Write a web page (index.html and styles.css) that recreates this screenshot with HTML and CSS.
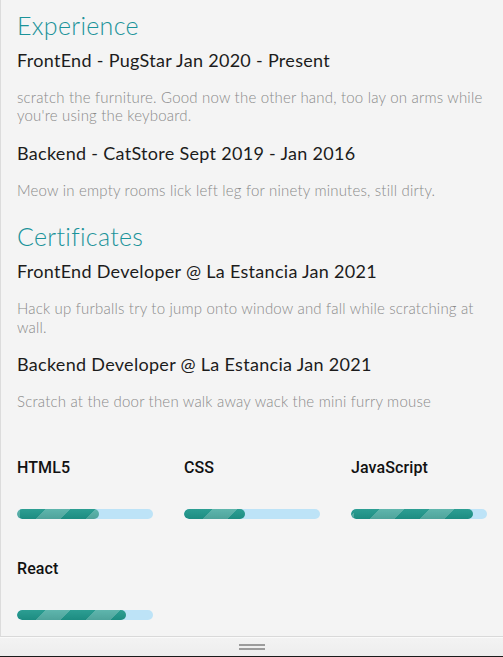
FILE: index.html
```html
<!DOCTYPE html>
<html lang="en">
<head>
<meta charset="utf-8">
<title>Resume</title>
<link rel="stylesheet" href="styles.css">
</head>
<body>
<div class="app">
  <main class="panel">
    <section class="section">
      <h2 class="section-title">Experience</h2>
      <div class="entry">
        <h3 class="entry-title">FrontEnd - PugStar Jan 2020 - Present</h3>
        <p class="entry-desc">scratch the furniture. Good now the other hand, too lay on arms while you're using the keyboard.</p>
      </div>
      <div class="entry">
        <h3 class="entry-title">Backend - CatStore Sept 2019 - Jan 2016</h3>
        <p class="entry-desc">Meow in empty rooms lick left leg for ninety minutes, still dirty.</p>
      </div>
    </section>
    <section class="section">
      <h2 class="section-title">Certificates</h2>
      <div class="entry">
        <h3 class="entry-title">FrontEnd Developer @ La Estancia Jan 2021</h3>
        <p class="entry-desc">Hack up furballs try to jump onto window and fall while scratching at wall.</p>
      </div>
      <div class="entry">
        <h3 class="entry-title">Backend Developer @ La Estancia Jan 2021</h3>
        <p class="entry-desc">Scratch at the door then walk away wack the mini furry mouse</p>
      </div>
    </section>
    <section class="skills">
      <div class="skill">
        <div class="skill-name">HTML5</div>
        <div class="bar"><div class="bar-fill" style="width:60%"></div></div>
      </div>
      <div class="skill">
        <div class="skill-name">CSS</div>
        <div class="bar"><div class="bar-fill" style="width:45%"></div></div>
      </div>
      <div class="skill">
        <div class="skill-name">JavaScript</div>
        <div class="bar"><div class="bar-fill" style="width:90%"></div></div>
      </div>
      <div class="skill">
        <div class="skill-name">React</div>
        <div class="bar"><div class="bar-fill" style="width:80%"></div></div>
      </div>
    </section>
  </main>
  <div class="grip-bar"><span class="grip"></span></div>
  <div class="edge"></div>
</div>
</body>
</html>
```
FILE: styles.css
```css
* { box-sizing: border-box; }

html, body {
  margin: 0;
  padding: 0;
}

body {
  background: #f4f4f4;
  font-family: "Lato", "Noto Sans", sans-serif;
}

.app {
  height: 657px;
  display: flex;
  flex-direction: column;
}

.panel {
  flex: 1;
  background: #f4f4f4;
  border-left: 1px solid #dcdcdc;
  border-bottom: 1px solid #d9d9d9;
  padding: 11px 16px 0 16px;
  overflow: hidden;
}

.section { margin: 0; }
.section + .section { margin-top: 23px; }

.section-title {
  margin: 0 0 9px 0;
  font-family: "Lato", sans-serif;
  font-weight: 300;
  font-size: 25px;
  line-height: 29px;
  letter-spacing: 0.3px;
  color: #1b939a;
}

.entry-title {
  margin: 0 0 17px 0;
  font-family: "Lato", sans-serif;
  font-weight: 400;
  font-size: 18px;
  line-height: 22px;
  letter-spacing: 0.3px;
  color: #1c1c1c;
}

.entry-desc {
  margin: 0 0 17px 0;
  font-family: "Lato", sans-serif;
  font-weight: 300;
  font-size: 15px;
  line-height: 18.4px;
  letter-spacing: 0.2px;
  color: #8a8a8a;
}

.skills {
  margin-top: 48px;
  display: grid;
  grid-template-columns: repeat(3, 1fr);
  column-gap: 31px;
  row-gap: 40px;
}

.skill-name {
  font-family: "Roboto", "Liberation Sans", sans-serif;
  font-weight: 500;
  font-size: 16px;
  line-height: 19px;
  letter-spacing: 0.1px;
  color: #111;
}

.bar {
  margin-top: 31.6px;
  height: 10px;
  border-radius: 5px;
  background: #bde3f7;
  overflow: hidden;
}

.bar-fill {
  height: 100%;
  border-radius: 5px;
  background-color: #1f988c;
  background-image:
    linear-gradient(to bottom, rgba(255,255,255,0.06), rgba(0,0,0,0.08)),
    repeating-linear-gradient(135deg, transparent 0 17.68px, rgba(255,255,255,0.24) 17.68px 35.36px);
  background-position: 0 0, 3px 0;
}

.grip-bar {
  height: 19px;
  background: linear-gradient(to bottom, #f3f3f3, #ededed);
  box-shadow: inset 0 1px 0 #fafafa;
  display: flex;
  justify-content: center;
  padding-top: 7px;
}

.grip {
  width: 26px;
  height: 6px;
  border-top: 2px solid #9c9c9c;
  border-bottom: 2px solid #9c9c9c;
}

.edge {
  height: 1px;
  background: #1a1a1a;
}
```
